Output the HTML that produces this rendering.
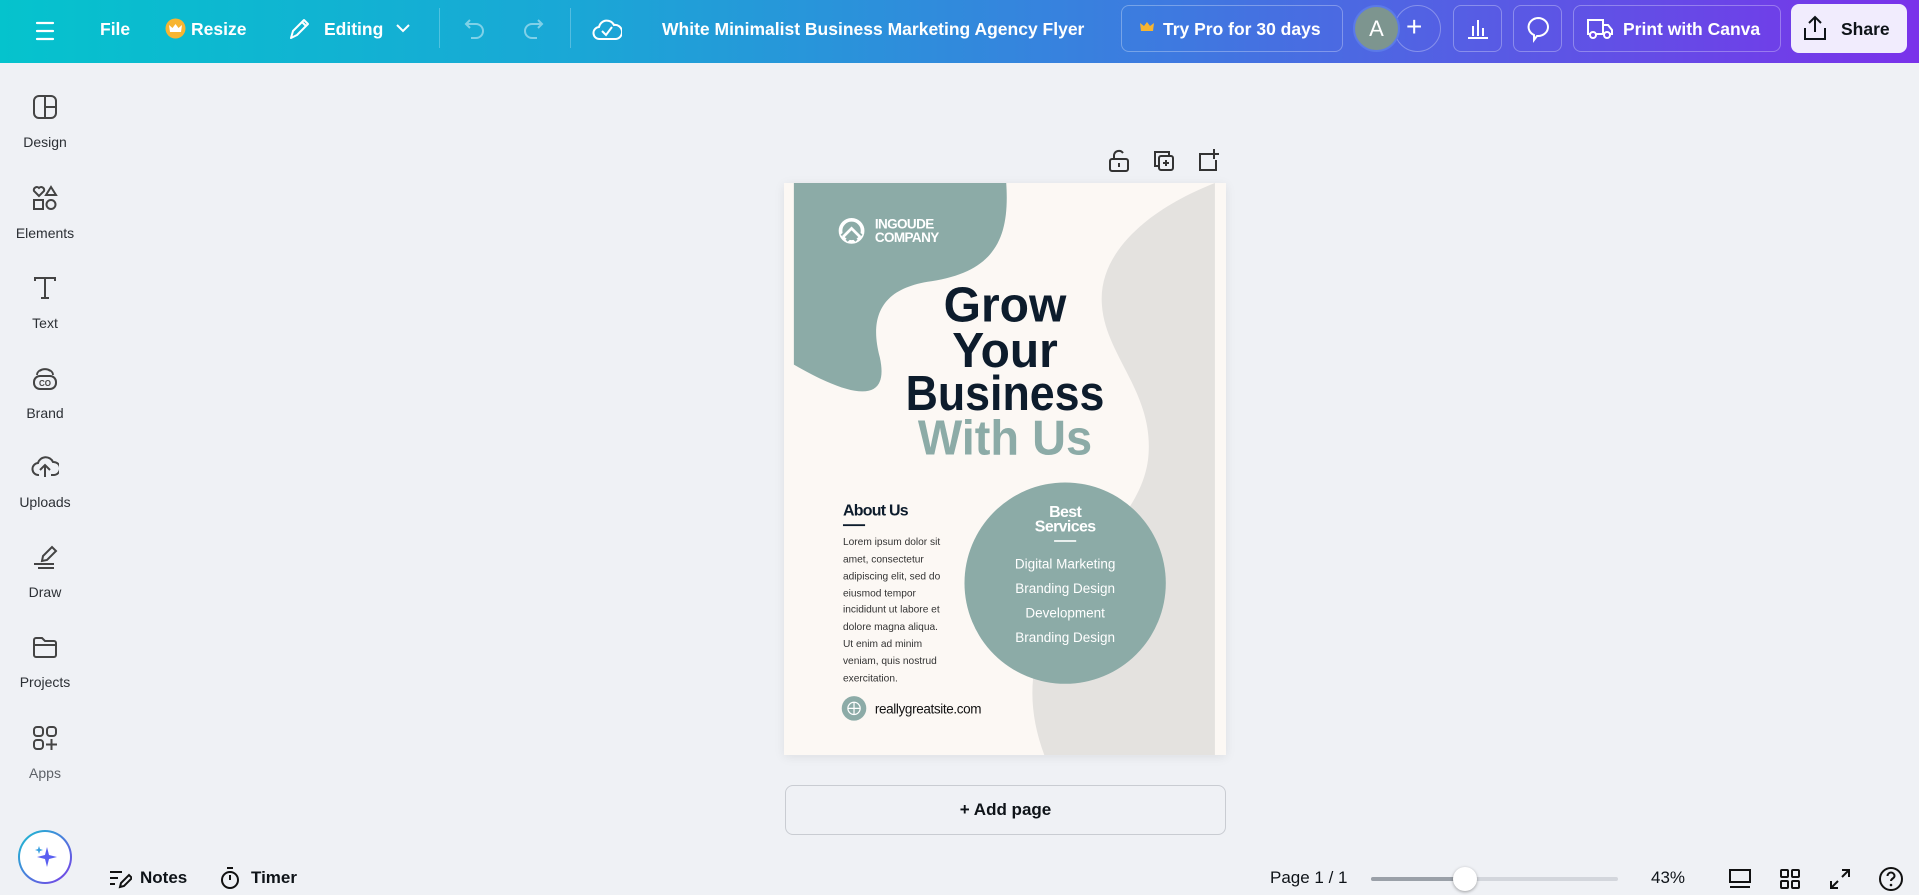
<!DOCTYPE html>
<html><head><meta charset="utf-8"><style>
*{margin:0;padding:0;box-sizing:border-box}
body{width:1919px;height:895px;overflow:hidden;background:#eff1f5;font-family:"Liberation Sans",sans-serif;position:relative;color:#0e1318}
.top{position:absolute;left:0;top:0;width:1919px;height:63px;background:linear-gradient(90deg,#05c3cd 0%,#1aa7d6 30%,#3f78e0 62%,#7a32ea 100%)}
.top .t{position:absolute;top:19px;color:#fff;font-weight:bold;font-size:17.5px}
.btn{position:absolute;border:1px solid rgba(255,255,255,.3);border-radius:8px;top:5px;height:47px}
.side{position:absolute;left:0;width:90px;text-align:center;font-size:14px;color:#2c3035}
.side svg{display:block;margin:0 auto}
.side div{margin-top:14px!important}
.abs{position:absolute}
.bt{position:absolute;top:868px;font-size:17px;font-weight:bold;color:#0e1318}
</style></head><body>
<div class="top">
  <svg class="abs" style="left:35px;top:20px" width="20" height="22" viewBox="0 0 20 22"><path d="M2 3h16M2 11h16M2 19h16" stroke="#fff" stroke-width="2.2" stroke-linecap="round"/></svg>
  <div class="t" style="left:100px">File</div>
  <svg class="abs" style="left:165px;top:18px" width="21" height="21" viewBox="0 0 21 21"><circle cx="10.5" cy="10.5" r="10" fill="#f7b531"/><path d="M5 14h11l1-7-3.5 3-3-4-3 4L4 7z" fill="#fff"/></svg>
  <div class="t" style="left:191px">Resize</div>
  <svg class="abs" style="left:287px;top:16px" width="24" height="26" viewBox="0 0 24 26"><path d="M4 22l2-7L17 4l4 4L10 19zM15 6l4 4" stroke="#fff" stroke-width="2" fill="none" stroke-linejoin="round"/></svg>
  <div class="t" style="left:324px">Editing</div>
  <svg class="abs" style="left:395px;top:22px" width="16" height="12" viewBox="0 0 16 12"><path d="M2 3l6 6 6-6" stroke="#fff" stroke-width="2" fill="none"/></svg>
  <div class="abs" style="left:439px;top:8px;width:1px;height:40px;background:rgba(255,255,255,.25)"></div>
  <svg class="abs" style="left:462px;top:16px" width="26" height="26" viewBox="0 0 26 26"><path d="M8 4L4 8l4 4M4 8h10a7 7 0 010 14H9" stroke="rgba(255,255,255,.45)" stroke-width="2" fill="none"/></svg>
  <svg class="abs" style="left:520px;top:16px" width="26" height="26" viewBox="0 0 26 26"><path d="M18 4l4 4-4 4M22 8H12a7 7 0 000 14h5" stroke="rgba(255,255,255,.45)" stroke-width="2" fill="none"/></svg>
  <div class="abs" style="left:570px;top:8px;width:1px;height:40px;background:rgba(255,255,255,.25)"></div>
  <svg class="abs" style="left:592px;top:15px" width="30" height="28" viewBox="0 0 30 28"><path d="M8 24a6 6 0 01-1-12 8 8 0 0115-2 6 6 0 012 14z" stroke="#fff" stroke-width="2" fill="none"/><path d="M10 16l4 4 6-8" stroke="#fff" stroke-width="2" fill="none"/></svg>
  <div class="t" style="left:662px;font-size:17.5px">White Minimalist Business Marketing Agency Flyer</div>
  <div class="btn" style="left:1121px;width:222px"></div>
  <svg class="abs" style="left:1140px;top:21px" width="14" height="13" viewBox="0 0 14 13"><path d="M1 10h12l1-8-4 3-3-4-3 4-4-3z" fill="#f7b531"/></svg>
  <div class="t" style="left:1163px">Try Pro for 30 days</div>
  <div class="abs" style="left:1394px;top:5px;width:47px;height:47px;border-radius:50%;border:1px solid rgba(255,255,255,.3)"></div>
  <div class="abs" style="left:1353px;top:5px;width:47px;height:47px;border-radius:50%;background:#7d958f;border:2px solid #5b7ae8;color:#fff;font-size:22px;text-align:center;line-height:43px">A</div>
  <div class="abs" style="left:1406px;top:11px;color:#fff;font-size:28px">+</div>
  <div class="btn" style="left:1453px;width:49px"></div>
  <svg class="abs" style="left:1466px;top:16px" width="24" height="24" viewBox="0 0 24 24"><path d="M2 22h20M7 20V10M12 20V4M17 20V12" stroke="#fff" stroke-width="2"/></svg>
  <div class="btn" style="left:1513px;width:49px"></div>
  <svg class="abs" style="left:1525px;top:15px" width="26" height="28" viewBox="0 0 26 28"><path d="M13 3a10 9 0 010 18h-1l-3 4v-5A10 9 0 0113 3z" stroke="#fff" stroke-width="2" fill="none"/></svg>
  <div class="btn" style="left:1573px;width:208px"></div>
  <svg class="abs" style="left:1586px;top:16px" width="28" height="24" viewBox="0 0 28 24"><path d="M2 4h15v14H2zM17 9h5l4 5v4h-9" stroke="#fff" stroke-width="2" fill="none"/><circle cx="7" cy="19" r="3" fill="#6a44e6" stroke="#fff" stroke-width="2"/><circle cx="21" cy="19" r="3" fill="#6a44e6" stroke="#fff" stroke-width="2"/></svg>
  <div class="t" style="left:1623px">Print with Canva</div>
  <div class="abs" style="left:1791px;top:4px;width:116px;height:49px;border-radius:8px;background:#f1ecfd"></div>
  <svg class="abs" style="left:1802px;top:14px" width="26" height="28" viewBox="0 0 26 28"><path d="M13 18V3M7 9l6-6 6 6M3 14v11h20V14" stroke="#0e1318" stroke-width="2" fill="none"/></svg>
  <div class="t" style="left:1841px;color:#0e1318">Share</div>
</div>

<div class="side" style="top:94px"><svg width="26" height="26" viewBox="0 0 26 26"><rect x="2" y="2" width="22" height="22" rx="5" stroke="#444" stroke-width="2" fill="none"/><path d="M13 2v22M13 13h11" stroke="#444" stroke-width="2"/></svg><div>Design</div></div>
<div class="side" style="top:185px"><svg width="26" height="26" viewBox="0 0 26 26"><path d="M7 11l-5-5a3 3 0 015-3 3 3 0 015 3z M19 2l5 8h-10z" stroke="#444" stroke-width="2" fill="none"/><rect x="2" y="15" width="9" height="9" stroke="#444" stroke-width="2" fill="none"/><circle cx="19" cy="19.5" r="4.5" stroke="#444" stroke-width="2" fill="none"/></svg><div>Elements</div></div>
<div class="side" style="top:275px"><svg width="26" height="26" viewBox="0 0 26 26"><path d="M3 6V3h20v3M13 3v20M9 23h8" stroke="#444" stroke-width="2" fill="none"/></svg><div>Text</div></div>
<div class="side" style="top:365px"><svg width="26" height="26" viewBox="0 0 26 26"><rect x="2" y="11" width="22" height="13" rx="6" stroke="#444" stroke-width="2" fill="none"/><path d="M5 10a8 6 0 0116 0M8 6a6 4 0 0110 0" stroke="#444" stroke-width="1.8" fill="none"/><text x="13" y="21" font-size="8" text-anchor="middle" font-weight="bold" fill="#444" font-family="Liberation Sans">CO</text></svg><div>Brand</div></div>
<div class="side" style="top:454px"><svg width="28" height="26" viewBox="0 0 28 26"><path d="M8 21a6 6 0 01-1-12 8 8 0 0115-1 6 6 0 011 13h-3" stroke="#444" stroke-width="2" fill="none"/><path d="M14 23V12M9 16l5-5 5 5" stroke="#444" stroke-width="2" fill="none"/></svg><div>Uploads</div></div>
<div class="side" style="top:544px"><svg width="26" height="26" viewBox="0 0 26 26"><path d="M10 17l1-5 9-9 4 4-9 9z" stroke="#444" stroke-width="2" fill="none"/><path d="M2 20h20M6 24h16" stroke="#444" stroke-width="2"/></svg><div>Draw</div></div>
<div class="side" style="top:634px"><svg width="26" height="26" viewBox="0 0 26 26"><path d="M2 6a2 2 0 012-2h6l3 3h9a2 2 0 012 2v12a2 2 0 01-2 2H4a2 2 0 01-2-2zM2 11h22" stroke="#444" stroke-width="2" fill="none"/></svg><div>Projects</div></div>
<div class="side" style="top:725px;color:#5d6167"><svg width="26" height="26" viewBox="0 0 26 26"><rect x="2" y="2" width="9" height="9" rx="3" stroke="#444" stroke-width="2" fill="none"/><rect x="15" y="2" width="9" height="9" rx="3" stroke="#444" stroke-width="2" fill="none"/><rect x="2" y="15" width="9" height="9" rx="3" stroke="#444" stroke-width="2" fill="none"/><path d="M19.5 14v11M14 19.5h11" stroke="#444" stroke-width="2"/></svg><div>Apps</div></div>

<svg class="abs" style="left:1108px;top:149px" width="22" height="24" viewBox="0 0 22 24"><rect x="2" y="10" width="18" height="12" rx="2" stroke="#333" stroke-width="2" fill="none"/><path d="M6 10V6a5 5 0 019-2" stroke="#333" stroke-width="2" fill="none"/><path d="M11 14v4" stroke="#333" stroke-width="2"/></svg>
<svg class="abs" style="left:1153px;top:150px" width="22" height="22" viewBox="0 0 22 22"><rect x="6" y="6" width="14" height="14" rx="2" stroke="#333" stroke-width="2" fill="none"/><path d="M16 6V2H2v14h4M13 10v6M10 13h6" stroke="#333" stroke-width="2" fill="none"/></svg>
<svg class="abs" style="left:1198px;top:148px" width="22" height="24" viewBox="0 0 22 24"><path d="M12 6H2v16h16V12M16 1v10M11 6h10" stroke="#333" stroke-width="2" fill="none"/></svg>

<div class="abs" style="left:784px;top:183px;width:442px;height:572px;box-shadow:0 2px 10px rgba(0,0,0,.08)">
<svg width="442" height="572" viewBox="0 0 360 466" font-family="Liberation Sans, sans-serif">
  <rect width="360" height="466" fill="#fcf8f4"/>
  <path d="M351,0 C300,20 255,55 259,100 C262,140 300,170 297,220 C295,260 260,290 230,330 C200,380 195,420 212,466 H351 Z" fill="#e4e2df"/>
  <path d="M8,0 H181 C184,45 172,72 120,80 C76,86 70,112 78,142 C86,178 60,178 8,148 Z" fill="#8caba7"/>
  <g fill="none" stroke="#fff" stroke-width="3"><circle cx="55" cy="39" r="9"/></g>
  <path d="M47,43 L55,35 L63,43 M51,47 L55,43 L59,47" stroke="#8caba7" stroke-width="2.5" fill="none"/>
  <path d="M48,44 L55,37 L62,44" stroke="#fff" stroke-width="2.2" fill="none"/>
  <text x="74" y="37" font-size="11" font-weight="bold" fill="#fff" letter-spacing="-0.5">INGOUDE</text>
  <text x="74" y="48" font-size="11" font-weight="bold" fill="#fff" letter-spacing="-0.5">COMPANY</text>
  <g font-weight="bold" font-size="40" text-anchor="middle" fill="#0d1c2c">
    <text x="180" y="113" textLength="100" lengthAdjust="spacingAndGlyphs">Grow</text>
    <text x="180" y="150" textLength="86" lengthAdjust="spacingAndGlyphs">Your</text>
    <text x="180" y="185" textLength="162" lengthAdjust="spacingAndGlyphs">Business</text>
    <text x="180" y="221" textLength="142" lengthAdjust="spacingAndGlyphs" fill="#8caba7">With Us</text>
  </g>
  <circle cx="229" cy="326" r="82" fill="#8caba7"/>
  <g fill="#fff" text-anchor="middle">
    <text x="229" y="272" font-size="13" font-weight="bold" letter-spacing="-0.5">Best</text>
    <text x="229" y="284" font-size="13" font-weight="bold" letter-spacing="-0.5">Services</text>
    <rect x="220" y="291" width="18" height="1.3"/>
    <text x="229" y="314" font-size="11">Digital Marketing</text>
    <text x="229" y="334" font-size="11">Branding Design</text>
    <text x="229" y="354" font-size="11">Development</text>
    <text x="229" y="374" font-size="11">Branding Design</text>
  </g>
  <text x="48" y="271" font-size="13" font-weight="bold" fill="#0d1c2c" letter-spacing="-0.6">About Us</text>
  <rect x="48" y="278" width="18" height="1.5" fill="#0d1c2c"/>
  <g font-size="8.3" fill="#333">
    <text x="48" y="295">Lorem ipsum dolor sit</text>
    <text x="48" y="309">amet, consectetur</text>
    <text x="48" y="323">adipiscing elit, sed do</text>
    <text x="48" y="337">eiusmod tempor</text>
    <text x="48" y="350">incididunt ut labore et</text>
    <text x="48" y="364">dolore magna aliqua.</text>
    <text x="48" y="378">Ut enim ad minim</text>
    <text x="48" y="392">veniam, quis nostrud</text>
    <text x="48" y="406">exercitation.</text>
  </g>
  <circle cx="57" cy="428" r="10" fill="#8caba7"/>
  <circle cx="57" cy="428" r="5" fill="none" stroke="#fff" stroke-width="1"/>
  <path d="M52,428 H62 M57,423 V433" stroke="#fff" stroke-width="1"/>
  <text x="74" y="432" font-size="11" fill="#111" letter-spacing="-0.3">reallygreatsite.com</text>
</svg>
</div>

<div class="abs" style="left:785px;top:785px;width:441px;height:50px;border:1px solid #c9ccd2;border-radius:8px;text-align:center;line-height:48px;font-size:17px;font-weight:bold;color:#0e1318">+ Add page</div>

<div class="abs" style="left:18px;top:830px;width:54px;height:54px;border-radius:50%;background:linear-gradient(135deg,#18c1d0,#7b3ae8);padding:2px"><div style="width:50px;height:50px;border-radius:50%;background:#fff"></div></div>
<svg class="abs" style="left:32px;top:843px" width="28" height="28" viewBox="0 0 28 28"><path d="M15 4l2 8 8 2-8 2-2 8-2-8-8-2 8-2z" fill="#5a5ff0"/><path d="M7 3l1 3 3 1-3 1-1 3-1-3-3-1 3-1z" fill="#3aa0e0"/></svg>
<svg class="abs" style="left:108px;top:868px" width="24" height="22" viewBox="0 0 24 22"><path d="M2 4h12M2 10h8M2 16h5" stroke="#111" stroke-width="2"/><path d="M12 19l1-4 8-8 3 3-8 8z" stroke="#111" stroke-width="2" fill="none"/></svg>
<div class="bt" style="left:140px">Notes</div>
<svg class="abs" style="left:219px;top:866px" width="22" height="24" viewBox="0 0 22 24"><circle cx="11" cy="14" r="8" stroke="#111" stroke-width="2" fill="none"/><path d="M8 2h6M11 14V9" stroke="#111" stroke-width="2"/></svg>
<div class="bt" style="left:251px">Timer</div>
<div class="bt" style="left:1270px;font-weight:normal">Page 1 / 1</div>
<div class="abs" style="left:1371px;top:877px;width:247px;height:4px;border-radius:2px;background:#d3d6dc"></div>
<div class="abs" style="left:1371px;top:877px;width:94px;height:4px;border-radius:2px;background:#9aa0a8"></div>
<div class="abs" style="left:1453px;top:867px;width:24px;height:24px;border-radius:50%;background:#fff;box-shadow:0 1px 3px rgba(0,0,0,.35)"></div>
<div class="bt" style="left:1651px;font-weight:normal">43%</div>
<svg class="abs" style="left:1728px;top:868px" width="24" height="22" viewBox="0 0 24 22"><rect x="2" y="2" width="20" height="12" stroke="#111" stroke-width="2" fill="none"/><path d="M2 19h20" stroke="#111" stroke-width="2"/></svg>
<svg class="abs" style="left:1779px;top:868px" width="22" height="22" viewBox="0 0 22 22"><rect x="2" y="2" width="7" height="7" rx="1" stroke="#111" stroke-width="2" fill="none"/><rect x="13" y="2" width="7" height="7" rx="1" stroke="#111" stroke-width="2" fill="none"/><rect x="2" y="13" width="7" height="7" rx="1" stroke="#111" stroke-width="2" fill="none"/><rect x="13" y="13" width="7" height="7" rx="1" stroke="#111" stroke-width="2" fill="none"/></svg>
<svg class="abs" style="left:1829px;top:868px" width="22" height="22" viewBox="0 0 22 22"><path d="M13 2h7v7M20 2l-7 7M9 20H2v-7M2 20l7-7" stroke="#111" stroke-width="2" fill="none"/></svg>
<svg class="abs" style="left:1878px;top:866px" width="26" height="26" viewBox="0 0 26 26"><circle cx="13" cy="13" r="11" stroke="#111" stroke-width="2" fill="none"/><path d="M9.5 10a3.5 3.5 0 117 0c0 2.5-3.5 2.5-3.5 5" stroke="#111" stroke-width="2" fill="none"/><circle cx="13" cy="19" r="1.3" fill="#111"/></svg>
</body></html>
